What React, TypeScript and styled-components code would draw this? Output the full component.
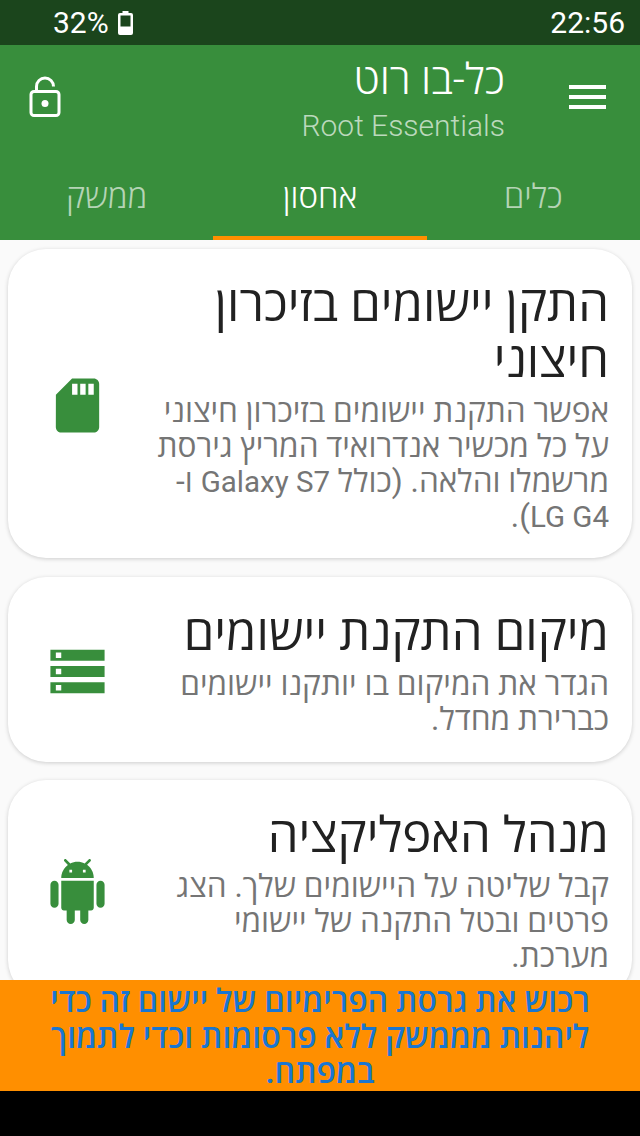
import React from "react";
import styled, { createGlobalStyle } from "styled-components";

const Global = createGlobalStyle`
  html, body { margin: 0; padding: 0; background: #000; }
  #root { width: 640px; height: 1136px; }
  * { box-sizing: border-box; }
`;

const FONT = `Roboto, "Open Sans", "Noto Sans", "DejaVu Sans", sans-serif`;

const Screen = styled.div`
  width: 640px;
  height: 1136px;
  display: flex;
  flex-direction: column;
  overflow: hidden;
  font-family: ${FONT};
  background: #000;
`;

const StatusBar = styled.div`
  height: 45px;
  flex: none;
  background: #1b451c;
  color: #fff;
  font-size: 30px;
  display: flex;
  align-items: center;
  justify-content: space-between;
  padding: 0 15px 0 53px;
`;

const Battery = styled.div`
  display: flex;
  align-items: center;
  gap: 9px;
`;

const Header = styled.header`
  height: 195px;
  flex: none;
  background: #388e3c;
  display: flex;
  flex-direction: column;
`;

const TopRow = styled.div`
  height: 104px;
  flex: none;
  display: flex;
  align-items: center;
  justify-content: space-between;
  padding: 0 34px 0 29px;
`;

const TitleGroup = styled.div`
  display: flex;
  align-items: center;
  gap: 64px;
`;

const Titles = styled.div`
  display: flex;
  flex-direction: column;
  align-items: flex-end;
  margin-top: 6px;
`;

const AppTitle = styled.div`
  font-size: 42.5px;
  line-height: 52px;
  font-weight: 300;
  color: #fff;
`;

const AppSubtitle = styled.div`
  font-size: 30px;
  line-height: 40px;
  font-weight: 300;
  color: #bcd9bd;
`;

const Tabs = styled.nav`
  flex: 1;
  display: grid;
  grid-template-columns: repeat(3, 1fr);
`;

const Tab = styled.div<{ $active?: boolean }>`
  display: flex;
  align-items: center;
  justify-content: center;
  padding-top: 6px;
  font-size: 33px;
  font-weight: 300;
  color: ${(p) => (p.$active ? "#fff" : "#b5d4b6")};
  border-bottom: 4px solid ${(p) => (p.$active ? "#ff8f00" : "transparent")};
`;

const Content = styled.main`
  flex: 1;
  min-height: 0;
  overflow: hidden;
  background: #fafafa;
  padding: 9px 8px 0;
  display: flex;
  flex-direction: column;
  gap: 18.5px;
`;

const Card = styled.section<{ $minHeight?: number }>`
  flex: none;
  display: flex;
  align-items: center;
  justify-content: space-between;
  min-height: ${(p) => p.$minHeight ?? 0}px;
  background: #fff;
  border-radius: 38px;
  padding: 28px 23px 24px 37px;
  box-shadow: 0 1px 4px rgba(0, 0, 0, 0.18);
`;

const CardText = styled.div`
  width: 456px;
  flex: none;
`;

const CardTitle = styled.h2`
  margin: 0 0 5px;
  font-size: 49px;
  line-height: 56px;
  font-weight: 400;
  color: #212121;
`;

const CardBody = styled.p`
  margin: 0;
  font-size: 31.6px;
  line-height: 35px;
  font-weight: 400;
  color: #757575;
`;

const Latin = styled.span`
  font-size: 29.5px;
  line-height: 1;
`;

const CardIcon = styled.svg`
  width: 65px;
  height: 65px;
  flex: none;
  fill: #388e3c;
`;

const Banner = styled.div`
  height: 111px;
  flex: none;
  background: #ff8f00;
  color: #1976d2;
  font-size: 32px;
  line-height: 35.5px;
  font-weight: 600;
  text-align: center;
  padding: 4px 40px 0;
`;

const NavBar = styled.div`
  height: 45px;
  flex: none;
  background: #000;
`;

const cards = [
  {
    title: "התקן יישומים בזיכרון חיצוני",
    body: (
      <>
        אפשר התקנת יישומים בזיכרון חיצוני על כל מכשיר אנדרואיד המריץ גירסת מרשמלו והלאה. (כולל <Latin>Galaxy S7</Latin> ו-<Latin>LG G4</Latin>).
      </>
    ),
    icon: "M18 2h-8L4.02 8 4 20c0 1.1.9 2 2 2h12c1.1 0 2-.9 2-2V4c0-1.1-.9-2-2-2zm-6 6h-2V4h2v4zm3 0h-2V4h2v4zm3 0h-2V4h2v4z",
  },
  {
    title: "מיקום התקנת יישומים",
    body: "הגדר את המיקום בו יותקנו יישומים כברירת מחדל.",
    minHeight: 185,
    icon: "M2 20h20v-4H2v4zm2-3h2v2H4v-2zM2 4v4h20V4H2zm4 3H4V5h2v2zm-4 7h20v-4H2v4zm2-3h2v2H4v-2z",
  },
  {
    title: "מנהל האפליקציה",
    body: "קבל שליטה על היישומים שלך. הצג פרטים ובטל התקנה של יישומי מערכת.",
    icon: "M6 18c0 .55.45 1 1 1h1v3.5c0 .83.67 1.5 1.5 1.5s1.5-.67 1.5-1.5V19h2v3.5c0 .83.67 1.5 1.5 1.5s1.5-.67 1.5-1.5V19h1c.55 0 1-.45 1-1V8H6v10zM3.5 8C2.67 8 2 8.67 2 9.5v7c0 .83.67 1.5 1.5 1.5S5 17.33 5 16.5v-7C5 8.67 4.33 8 3.5 8zm17 0c-.83 0-1.5.67-1.5 1.5v7c0 .83.67 1.5 1.5 1.5s1.5-.67 1.5-1.5v-7c0-.83-.67-1.5-1.5-1.5zm-4.97-5.84l1.3-1.3c.2-.2.2-.51 0-.71-.2-.2-.51-.2-.71 0l-1.48 1.48C13.85 1.23 12.95 1 12 1c-.96 0-1.86.23-2.66.63L7.85.15c-.2-.2-.51-.2-.71 0-.2.2-.2.51 0 .71l1.31 1.31C6.97 3.26 6 5.01 6 7h12c0-1.99-.97-3.75-2.47-4.84zM10 5H9V4h1v1zm5 0h-1V4h1v1z",
  },
];

export default function App() {
  return (
    <Screen>
      <Global />
      <StatusBar>
        <Battery>
          <span>32%</span>
          <svg width="15" height="24" viewBox="0 0 15 24" fill="none">
            <path d="M4.5 0h6v2h2.500a2 2 0 0 1 2 2v18a2 2 0 0 1-2 2H2a2 2 0 0 1-2-2V4a2 2 0 0 1 2-2h2.500z" fill="#fff" />
            <rect x="2.500" y="4.500" width="10" height="11" fill="#1b451c" />
          </svg>
        </Battery>
        <span>22:56</span>
      </StatusBar>
      <Header>
        <TopRow>
          <svg width="32" height="42" viewBox="0 0 32 42" fill="none" stroke="#fff" strokeWidth="3">
            <rect x="2" y="15.500" width="28" height="24" rx="3" />
            <path d="M7.500 15V10.500a8.500 8.500 0 0 1 17 0" />
            <circle cx="16" cy="27.500" r="3.500" fill="#fff" stroke="none" />
          </svg>
          <TitleGroup>
            <Titles>
              <AppTitle dir="rtl">כל-בו רוט</AppTitle>
              <AppSubtitle>Root Essentials</AppSubtitle>
            </Titles>
            <svg width="37" height="24" viewBox="0 0 37 24" fill="#fff">
              <rect y="0" width="37" height="4" />
              <rect y="10" width="37" height="4" />
              <rect y="20" width="37" height="4" />
            </svg>
          </TitleGroup>
        </TopRow>
        <Tabs dir="rtl">
          <Tab>כלים</Tab>
          <Tab $active>אחסון</Tab>
          <Tab>ממשק</Tab>
        </Tabs>
      </Header>
      <Content dir="rtl">
        {cards.map((c) => (
          <Card key={c.title} $minHeight={c.minHeight}>
            <CardText>
              <CardTitle>{c.title}</CardTitle>
              <CardBody>{c.body}</CardBody>
            </CardText>
            <CardIcon viewBox="0 0 24 24">
              <path d={c.icon} />
            </CardIcon>
          </Card>
        ))}
      </Content>
      <Banner dir="rtl">רכוש את גרסת הפרימיום של יישום זה כדי ליהנות מממשק ללא פרסומות וכדי לתמוך במפתח.</Banner>
      <NavBar />
    </Screen>
  );
}
